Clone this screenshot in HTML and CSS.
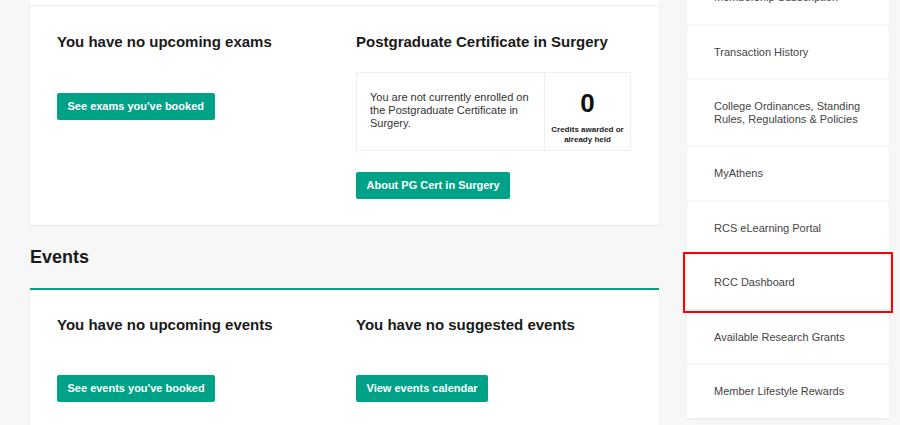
FILE: index.html
```html
<!DOCTYPE html>
<html lang="en">
<head>
<meta charset="utf-8">
<title>Dashboard</title>
<link rel="stylesheet" href="styles.css">
</head>
<body>
<div class="page">
  <main class="main">
    <section class="card">
      <div class="card-sep"></div>
      <div class="card-body">
        <div class="col">
          <h3 class="col-title">You have no upcoming exams</h3>
          <a class="btn btn-spaced" href="#">See exams you've booked</a>
        </div>
        <div class="col">
          <h3 class="col-title">Postgraduate Certificate in Surgery</h3>
          <div class="pg-box">
            <div class="pg-text">You are not currently enrolled on the Postgraduate Certificate in Surgery.</div>
            <div class="pg-credits">
              <div class="pg-num">0</div>
              <div class="pg-label">Credits awarded or already held</div>
            </div>
          </div>
          <a class="btn" href="#">About PG Cert in Surgery</a>
        </div>
      </div>
    </section>

    <h2 class="section-title">Events</h2>
    <section class="card card-accent">
      <div class="card-body">
        <div class="col">
          <h3 class="col-title">You have no upcoming events</h3>
          <a class="btn btn-spaced" href="#">See events you've booked</a>
        </div>
        <div class="col">
          <h3 class="col-title">You have no suggested events</h3>
          <a class="btn btn-spaced" href="#">View events calendar</a>
        </div>
      </div>
    </section>
  </main>

  <aside class="sidebar">
    <a class="side-item" href="#">Membership Subscription</a>
    <a class="side-item" href="#">Transaction History</a>
    <a class="side-item" href="#">College Ordinances, Standing Rules, Regulations &amp; Policies</a>
    <a class="side-item" href="#">MyAthens</a>
    <a class="side-item" href="#">RCS eLearning Portal</a>
    <a class="side-item side-item-marked" href="#">RCC Dashboard</a>
    <a class="side-item" href="#">Available Research Grants</a>
    <a class="side-item" href="#">Member Lifestyle Rewards</a>
  </aside>
</div>
</body>
</html>
```

FILE: styles.css
```css
* {
  box-sizing: border-box;
}

html, body {
  margin: 0;
  padding: 0;
}

body {
  background: #f7f7f7;
  font-family: "Liberation Sans", Arial, sans-serif;
  color: #1a1a1a;
  height: 425px;
  overflow: hidden;
}

.page {
  display: flex;
  align-items: flex-start;
  gap: 28px;
  padding-left: 30px;
}

.main {
  width: 629px;
  flex: none;
}

.card {
  background: #fff;
  box-shadow: 0 1px 2px rgba(0, 0, 0, 0.07);
}

.card-sep {
  height: 6px;
  border-bottom: 1px solid #efefef;
}

.card-accent {
  border-top: 2px solid #00a287;
}

.card-body {
  display: grid;
  grid-template-columns: 275px 275px;
  column-gap: 24px;
  padding: 27px 28px 26px 27px;
}

.card-accent .card-body {
  padding-top: 26px;
}

.col {
  display: flex;
  flex-direction: column;
  align-items: flex-start;
}

.col-title {
  margin: 0 0 21px;
  font-size: 15px;
  line-height: 18px;
  font-weight: bold;
  color: #1a1a1a;
}

.btn {
  display: inline-block;
  height: 27px;
  line-height: 27px;
  padding: 0 10.5px;
  background: #00a287;
  color: #fff;
  font-size: 11px;
  font-weight: bold;
  text-decoration: none;
  border-radius: 2px;
  white-space: nowrap;
}

.btn-spaced {
  margin-top: 21px;
}

.card-accent .btn-spaced {
  margin-top: 20px;
}

.pg-box {
  display: flex;
  width: 100%;
  height: 79px;
  border: 1px solid #efefef;
  margin-bottom: 21px;
}

.pg-text {
  width: 188px;
  padding: 0 14px 2px 13px;
  display: flex;
  align-items: center;
  font-size: 11px;
  line-height: 13px;
  color: #333;
  border-right: 1px solid #efefef;
}

.pg-credits {
  flex: 1;
  padding-top: 15px;
  text-align: center;
}

.pg-num {
  font-size: 26px;
  line-height: 30px;
  font-weight: bold;
  color: #111;
}

.pg-label {
  margin-top: 7px;
  font-size: 8px;
  line-height: 10px;
  font-weight: bold;
  color: #222;
  padding: 0 4px;
}

.section-title {
  margin: 21px 0 20px;
  font-size: 18px;
  line-height: 22px;
  font-weight: bold;
  color: #1a1a1a;
}

.sidebar {
  width: 202px;
  flex: none;
  display: flex;
  flex-direction: column;
  gap: 2px;
  margin-top: -29px;
  box-shadow: 0 1px 2px rgba(0, 0, 0, 0.07);
}

.side-item {
  display: block;
  background: #fff;
  padding: 20px 20px 20px 27px;
  font-size: 11px;
  line-height: 12.5px;
  color: #444;
  text-decoration: none;
}

.side-item-marked {
  outline: 2px solid #f00;
  outline-offset: 2px;
  position: relative;
}
```
